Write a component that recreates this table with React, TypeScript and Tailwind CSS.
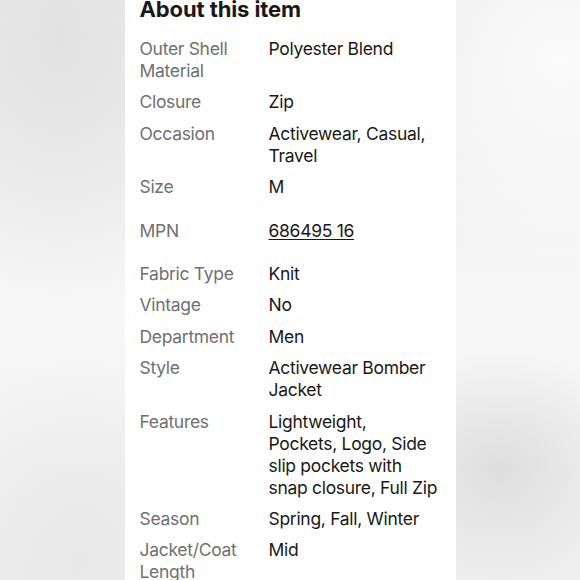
const specs = [
  { label: "Outer Shell Material", value: "Polyester Blend" },
  { label: "Closure", value: "Zip" },
  { label: "Occasion", value: "Activewear, Casual, Travel" },
  { label: "Size", value: "M" },
  { label: "MPN", value: "686495 16", link: true },
  { label: "Fabric Type", value: "Knit" },
  { label: "Vintage", value: "No" },
  { label: "Department", value: "Men" },
  { label: "Style", value: "Activewear Bomber Jacket" },
  { label: "Features", value: "Lightweight,\nPockets, Logo, Side\nslip pockets with\nsnap closure, Full Zip" },
  { label: "Season", value: "Spring, Fall, Winter" },
  { label: "Jacket/Coat Length", value: "Mid" },
];

export default function App() {
  return (
    <div className="relative flex h-[580px] w-[580px] justify-center overflow-hidden bg-[#f4f4f4] font-['Inter',sans-serif]">
      <div className="absolute inset-0 bg-[radial-gradient(ellipse_180px_260px_at_60px_40px,#e2e2e2,transparent),radial-gradient(ellipse_160px_200px_at_80px_560px,#e8e8e8,transparent),radial-gradient(ellipse_140px_120px_at_500px_470px,#dedede,transparent),radial-gradient(ellipse_200px_220px_at_560px_60px,#fbfbfb,transparent),linear-gradient(180deg,#ececec,#f7f7f7_55%,#efefef)]" />
      <div className="relative z-10 h-full w-[331px] bg-white pl-[15px] pr-[10px]">
        <h2 className="-mt-[4px] text-[22px] font-bold leading-[26px] tracking-[-0.1px] text-[#191919]">
          About this item
        </h2>
        <div className="mt-[16px] flex flex-col gap-[9.4px] tracking-[-0.3px]">
          {specs.map((s) => (
            <div key={s.label} className={`flex text-[17.5px] leading-[22px] ${s.link ? "py-3" : ""}`}>
              <div className="w-[129px] shrink-0 pr-3 text-[#707070]">{s.label}</div>
              <div className="flex-1 whitespace-pre-line text-[#191919]">
                {s.link ? <span className="underline underline-offset-2">{s.value}</span> : s.value}
              </div>
            </div>
          ))}
        </div>
      </div>
    </div>
  );
}
